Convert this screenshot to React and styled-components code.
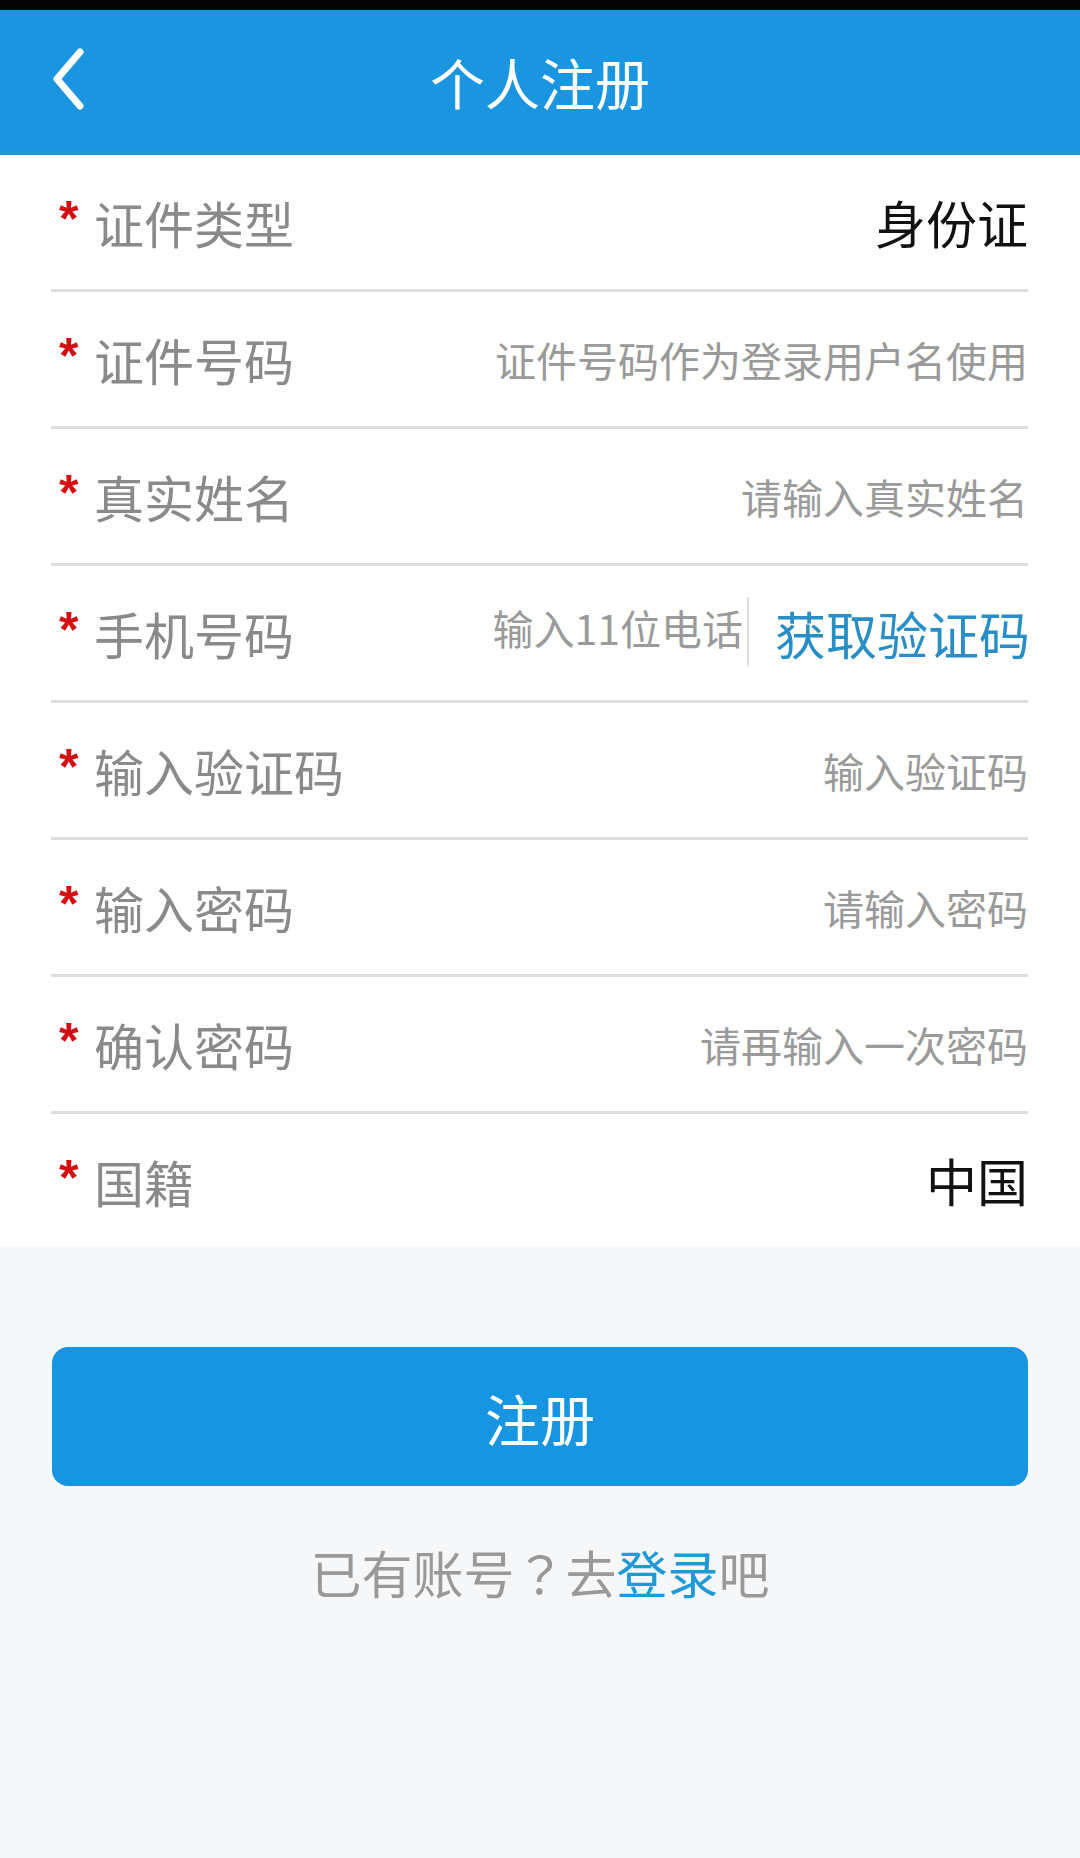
import React from 'react'
import styled, { createGlobalStyle } from 'styled-components'

const GlobalStyle = createGlobalStyle`
  body {
    margin: 0;
    background: #f6f7f9;
    font-family: "Noto Sans CJK SC", "Noto Sans", sans-serif;
  }
`

const fields = [
    { label: "证件类型", value: "身份证" },
    { label: "证件号码", placeholder: "证件号码作为登录用户名使用" },
    { label: "真实姓名", placeholder: "请输入真实姓名" },
    { label: "手机号码", placeholder: "输入11位电话", code: true },
    { label: "输入验证码", placeholder: "输入验证码" },
    { label: "输入密码", placeholder: "请输入密码" },
    { label: "确认密码", placeholder: "请再输入一次密码" },
    { label: "国籍", value: "中国" },
]

function BackIcon() {
    return (
        <svg width="40" height="64" viewBox="0 0 40 64">
            <polyline
                points="28,4 5,31 28,58"
                fill="none"
                stroke="#fff"
                strokeWidth="7"
                strokeLinecap="round"
                strokeLinejoin="round"
            />
        </svg>
    )
}

function App() {
    return (
        <Page>
            <GlobalStyle />
            <StatusBar />
            <Header>
                <BackButton><BackIcon /></BackButton>
                <Title>个人注册</Title>
                <span />
            </Header>
            <Form>
                {fields.map((f) => (
                    <Row key={f.label}>
                        <Label>
                            <Star>*</Star>
                            {f.label}
                        </Label>
                        {f.value && <Value>{f.value}</Value>}
                        {f.placeholder && (
                            <Placeholder raised={f.code}>{f.placeholder}</Placeholder>
                        )}
                        {f.code && (
                            <>
                                <Divider />
                                <CodeButton>获取验证码</CodeButton>
                            </>
                        )}
                    </Row>
                ))}
            </Form>
            <Bottom>
                <SubmitButton>注册</SubmitButton>
                <LoginHint>
                    已有账号<Mark>？</Mark>去<LoginLink>登录</LoginLink>吧
                </LoginHint>
            </Bottom>
        </Page>
    )
}

const Page = styled.div`
    min-height: 1858px;
    background: #f6f7f9;
`

const StatusBar = styled.div`
    height: 10px;
    background: #050505;
`

const Header = styled.div`
    height: 145px;
    background: #1a96e0;
    display: grid;
    grid-template-columns: 1fr auto 1fr;
    align-items: center;
`

const BackButton = styled.div`
    padding-left: 52px;
    padding-bottom: 6px;
    display: flex;
    align-items: center;
`

const Title = styled.div`
    color: #fff;
    font-size: 55px;
    line-height: 1;
    padding-bottom: 2px;
`

const Form = styled.div`
    background: #fff;
    padding: 0 52px 0 51px;
`

const Row = styled.div`
    height: 134px;
    display: flex;
    align-items: center;
    border-bottom: 3px solid #dedede;

    &:last-child {
        border-bottom: 0;
        height: 133px;
    }
`

const Label = styled.div`
    display: flex;
    align-items: center;
    color: #8a8a8a;
    font-size: 50px;
    line-height: 1;
`

const Star = styled.span`
    color: #d40f14;
    width: 35px;
    margin-left: 8px;
    align-self: flex-start;
    font-family: "Liberation Sans", sans-serif;
    font-weight: 700;
    font-size: 50px;
    line-height: 1;
    margin-top: -3px;
`

const Value = styled.div`
    margin-left: auto;
    color: #111;
    font-size: 51px;
    line-height: 1;
`

const Placeholder = styled.div`
    margin-left: auto;
    color: #9a9a9a;
    font-size: 41px;
    line-height: 1;
    margin-bottom: ${(p) => (p.raised ? "12px" : "0")};
`

const Divider = styled.div`
    width: 2px;
    height: 69px;
    background: #dcdcdc;
    margin: 0 26px 4px 4px;
`

const CodeButton = styled.div`
    color: #2a8ec6;
    font-size: 51px;
    line-height: 1;
    margin-right: -2px;
`

const Bottom = styled.div`
    padding: 100px 52px 0 52px;
    display: flex;
    flex-direction: column;
    align-items: center;
`

const SubmitButton = styled.button`
    width: 100%;
    height: 139px;
    border: 0;
    border-radius: 16px;
    background: #1795e0;
    color: #fff;
    font-family: "Noto Sans CJK SC", sans-serif;
    font-size: 55px;
`

const LoginHint = styled.div`
    margin-top: 56px;
    color: #999;
    font-size: 51px;
    line-height: 60px;
`

const Mark = styled.span`
    font-family: "Noto Sans CJK TC", sans-serif;
`

const LoginLink = styled.span`
    color: #1f9ad6;
`

export default App
